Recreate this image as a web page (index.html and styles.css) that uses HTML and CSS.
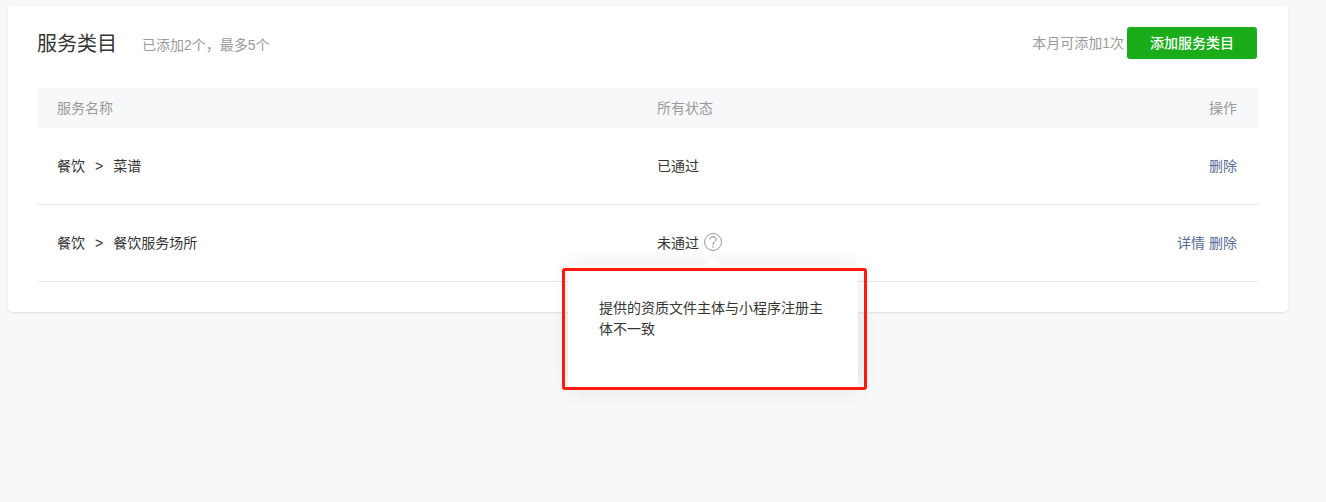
FILE: index.html
```html
<!DOCTYPE html>
<html lang="zh-CN">
  <head>
    <meta charset="UTF-8" />
    <meta name="viewport" content="width=device-width, initial-scale=1.0" />
    <title>服务类目</title>
    <link rel="stylesheet" href="styles.css">
  </head>
  <body>
    <div class="card">
      <div class="card-header">
        <h2 class="card-title">服务类目</h2>
        <span class="card-tips">已添加2个，最多5个</span>
        <div class="card-actions">
          <span class="quota">本月可添加1次</span>
          <button class="add-button">添加服务类目</button>
        </div>
      </div>
      <table>
        <thead>
          <tr>
            <th class="col-name">服务名称</th>
            <th>所有状态</th>
            <th class="col-actions">操作</th>
          </tr>
        </thead>
        <tbody>
          <tr>
            <td class="col-name">餐饮<span class="sep">&gt;</span>菜谱</td>
            <td>已通过</td>
            <td class="col-actions"><a href="#">删除</a></td>
          </tr>
          <tr>
            <td class="col-name">餐饮<span class="sep">&gt;</span>餐饮服务场所</td>
            <td>
              <div class="status">
                未通过
                <svg class="help-icon" width="18" height="18" viewBox="0 0 18 18" fill="none">
                  <circle cx="9" cy="9" r="8.5" stroke="#999" />
                  <path d="M5.9 6.6C5.9 4.8 7.2 3.7 9 3.7C10.8 3.7 12.1 4.8 12.1 6.4C12.1 8.4 9 8.9 9 11.3V12" stroke="#808080" />
                  <path d="M9 13V14.6" stroke="#808080" />
                </svg>
                <div class="popover">
                  <span class="popover-arrow"></span>
                  <p>提供的资质文件主体与小程序注册主体不一致</p>
                  <span class="highlight"></span>
                </div>
              </div>
            </td>
            <td class="col-actions"><a href="#">详情</a> <a href="#">删除</a></td>
          </tr>
        </tbody>
      </table>
    </div>
  </body>
</html>
```

FILE: styles.css
```css
body {
  margin: 0;
  height: 502px;
  overflow: hidden;
  background-color: #f6f8f9;
  font-family: "Liberation Sans", "Noto Sans CJK SC", sans-serif;
  font-size: 14px;
  color: #353535;
}
.card {
  margin: 6px 38px 0 8px;
  height: 306px;
  box-sizing: border-box;
  padding: 21px 30px 0;
  background: #ffffff;
  border-radius: 5px;
  box-shadow: 0 1px 2px rgba(0, 0, 0, 0.1);
}
.card-header {
  display: flex;
  align-items: center;
  height: 32px;
  margin-bottom: 29px;
}
.card-title {
  margin: 0 25px 0 -1px;
  padding-bottom: 2px;
  font-size: 20px;
  font-weight: 400;
}
.card-tips,
.quota {
  color: #9a9a9a;
}
.card-tips {
  padding-top: 2px;
}
.quota {
  padding-bottom: 3px;
}
.card-actions {
  display: flex;
  align-items: center;
  gap: 3px;
  margin-left: auto;
  margin-right: 1px;
}
.add-button {
  width: 130px;
  height: 32px;
  padding: 0 0 2px;
  border: none;
  border-radius: 3px;
  background-color: #1aad19;
  color: white;
  font-family: inherit;
  font-size: 14px;
  font-weight: 500;
}
table {
  width: 100%;
  border-collapse: collapse;
  table-layout: fixed;
}
th {
  height: 38px;
  padding: 0 0 2px;
  background-color: #f6f8f9;
  color: #9a9a9a;
  font-weight: 400;
  text-align: left;
}
td {
  height: 74px;
  padding: 0 0 2px;
  border-bottom: 1px solid #e7e7eb;
}
.col-name {
  width: 600px;
  padding-left: 19px;
}
.col-actions {
  width: 300px;
  padding-right: 21px;
  text-align: right;
}
.col-actions a {
  color: #576b95;
  text-decoration: none;
}
.sep {
  margin: 0 10px;
}
.status {
  position: relative;
  display: flex;
  align-items: center;
  gap: 5px;
}
.popover {
  position: absolute;
  top: 33px;
  left: -89px;
  z-index: 2;
  width: 290px;
  height: 122px;
  box-sizing: border-box;
  padding: 33px 35px 0 31px;
  background: #ffffff;
  border-radius: 3px;
  box-shadow: 0 1px 20px rgba(0, 0, 0, 0.1);
  line-height: 21px;
}
.popover p {
  margin: 0;
}
.popover-arrow {
  position: absolute;
  top: -8px;
  left: 137px;
  width: 0;
  height: 0;
  border-left: 8px solid transparent;
  border-right: 8px solid transparent;
  border-bottom: 8px solid #ffffff;
}
.highlight {
  position: absolute;
  top: 3px;
  left: -6px;
  width: 305px;
  height: 122px;
  box-sizing: border-box;
  border: 3px solid #ff1a0d;
  border-radius: 3px;
}
```
